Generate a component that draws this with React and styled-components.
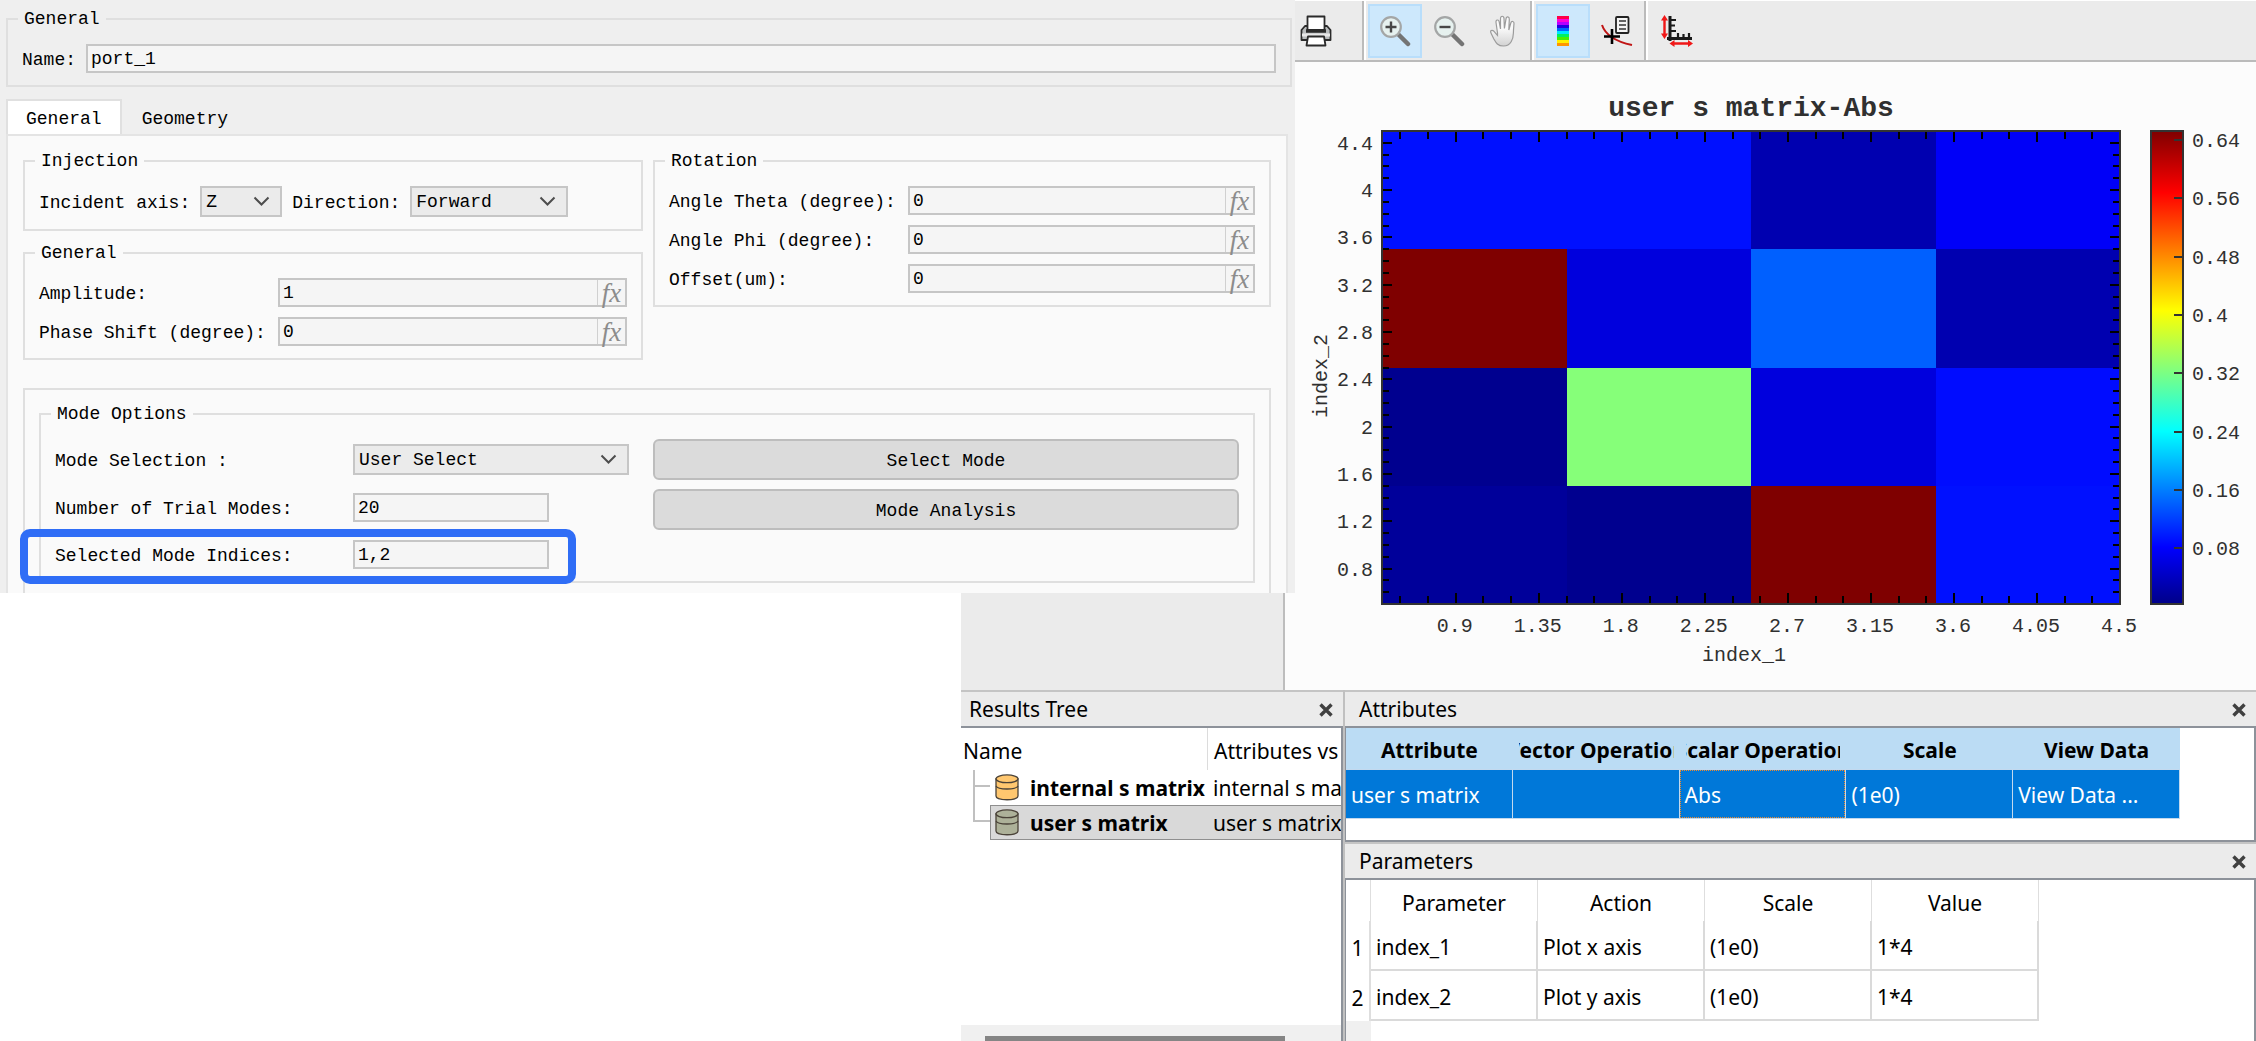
import React, { useId } from "react";
import styled, { createGlobalStyle, css } from "styled-components";

const MONO = `"Liberation Mono", "DejaVu Sans Mono", monospace`;
const SANS = `"Noto Sans", "Open Sans", sans-serif`;

const Global = createGlobalStyle`
  *, *::before, *::after { box-sizing: border-box; }
  body { margin: 0; background: #fff; color: #000; }
  button, input, select { font: inherit; color: inherit; margin: 0; }
`;

/* ---------- page frame ---------- */

const Page = styled.main`
  display: grid;
  grid-template-columns: minmax(0, 961fr) minmax(0, 324fr) 10px minmax(0, 961fr);
  grid-template-rows: auto auto 1fr;
  min-height: 100vh;
  overflow: hidden;
`;

const Dialog = styled.form`
  grid-area: 1 / 1 / 2 / 4;
  z-index: 1;
  display: flex;
  flex-direction: column;
  padding: 9px 3px 0 6px;
  background: #efefef;
  font: 18px/20px ${MONO};
`;

const Backdrop = styled.div`
  grid-area: 2 / 2 / 3 / 3;
  min-height: 97px;
  background: #ebebeb;
  border-right: 2px solid #bdbdbd;
`;

const PlotPane = styled.section`
  grid-area: 1 / 3 / 3 / 5;
  background: #fcfcfc;
`;

const Docks = styled.div`
  grid-area: 3 / 2 / 4 / 5;
  display: grid;
  grid-template-columns: minmax(0, 382fr) minmax(0, 913fr);
  font: 21px/28px ${SANS};
`;

/* ---------- dialog ---------- */

const Group = styled.fieldset`
  min-width: 0;
  margin: 0;
  padding: 15px 14px 12px;
  border: 2px solid #dfdfdf;
`;

const Legend = styled.legend`
  margin-left: -4px;
  padding: 0 6px;
  height: 20px;
`;

const Row = styled.div`
  display: flex;
  align-items: center;
  gap: 10px;
`;

const Stack = styled.div`
  display: flex;
  flex-direction: column;
  gap: ${(p) => p.$gap}px;
`;

const Label = styled.label`
  flex: none;
  white-space: pre;
  padding-top: 2px;
  width: ${(p) => (p.$width ? p.$width + "px" : "auto")};
`;

const TextInput = styled.input`
  flex: 1;
  min-width: 0;
  width: 100%;
  height: 29px;
  padding: 1px 3px 0;
  border: 2px solid #c6c6c6;
  border-radius: 0;
  background: #f5f5f5;
`;

const ShortInput = styled(TextInput)`
  flex: none;
  width: 196px;
`;

const Formula = styled.div`
  flex: 1;
  min-width: 0;
  display: flex;
  height: 29px;
  border: 2px solid #c6c6c6;
  background: #f5f5f5;
`;

const FormulaInput = styled(TextInput)`
  height: 100%;
  border: 0;
`;

const FxButton = styled.button`
  width: 28px;
  padding: 0;
  border: 0;
  border-left: 1px solid #d0d0d0;
  background: transparent;
  color: #8c8c8c;
  font: italic 27px/22px "Liberation Serif", serif;
`;

const SelectBox = styled.span`
  position: relative;
  flex: none;
  width: ${(p) => p.$width}px;

  select {
    appearance: none;
    display: block;
    width: 100%;
    height: 31px;
    padding: 1px 30px 0 4px;
    border: 2px solid #c6c6c6;
    border-radius: 0;
    background: #ebebeb;
  }
  svg {
    position: absolute;
    right: 12px;
    top: 10px;
    pointer-events: none;
  }
`;

const TabBar = styled.div`
  display: flex;
  margin-top: 12px;
`;

const Tab = styled.button`
  height: 35px;
  padding: 2px 18px 0;
  border: 2px solid transparent;
  border-bottom: 0;
  background: transparent;
  ${(p) =>
    p.$active &&
    css`
      border-color: #e0e0e0;
      background: #fff;
    `}
`;

const TabBody = styled.div`
  margin-right: 4px;
  padding: 15px 15px 0;
  border: 2px solid #e4e4e4;
  border-width: 2px 2px 0;
  background: #fafafa;
`;

const Columns = styled.div`
  display: grid;
  grid-template-columns: minmax(0, 621fr) minmax(0, 619fr);
  gap: 10px;
  align-items: start;
`;

const ModeFrame = styled.div`
  margin-top: 28px;
  padding: 14px 14px 10px;
  border: 2px solid #dfdfdf;
  border-bottom: 0;
`;

const ModeGroup = styled(Group)`
  padding-top: 15px;
`;

const ModeColumns = styled.div`
  display: flex;
  gap: 24px;
  align-items: flex-start;
`;

const ModeForm = styled(Stack)`
  padding-top: 5px;
  width: 574px;
`;

const ModeActions = styled(Stack)`
  flex: 1;
`;

const Highlighted = styled(Row)`
  position: relative;
  &::after {
    content: "";
    position: absolute;
    inset: -11px 53px -15px -35px;
    border: 8px solid #2f6df6;
    border-radius: 10px;
    pointer-events: none;
  }
`;

const PushButton = styled.button`
  height: 41px;
  padding-top: 3px;
  border: 2px solid #bdbdbd;
  border-radius: 6px;
  background: #dbdbdb;
`;

/* ---------- toolbar ---------- */

const Toolbar = styled.div`
  display: flex;
  height: 62px;
  border-top: 1px solid #fff;
  border-bottom: 2px solid #bbb;
  background: #ebebeb;
`;

const ToolGroup = styled.div`
  display: flex;
  align-items: center;
  min-width: 79px;
  padding-left: 2px;
  border-left: 2px solid #fff;
  border-right: 2px solid ${(p) => (p.$last ? "transparent" : "#bbb")};
`;

const ToolButton = styled.button`
  display: grid;
  place-items: center;
  width: 54px;
  height: 54px;
  padding: 0;
  border: 2px solid ${(p) => (p.$on ? "#b9defb" : "transparent")};
  background: ${(p) => (p.$on ? "#cde8fc" : "transparent")};
`;

/* ---------- docks ---------- */

const Dock = styled.section`
  display: flex;
  flex-direction: column;
  min-width: 0;
  flex: ${(p) => (p.$grow ? 1 : "none")};
`;

const DockColumn = styled.div`
  display: flex;
  flex-direction: column;
  min-width: 0;
  border-left: 2px solid #c0c0c0;
`;

const DockHeader = styled.header`
  display: flex;
  align-items: center;
  justify-content: space-between;
  height: 38px;
  padding: 0 8px ${(p) => (p.$inset ? "0 14px" : "0 8px")};
  border-top: 2px solid #c4c4c4;
  border-bottom: 2px solid #8d929a;
  background: #ebebeb;
`;

const DockTitle = styled.h2`
  margin: 0;
  font: inherit;
`;

const CloseButton = styled.button`
  display: grid;
  place-items: center;
  width: 18px;
  height: 22px;
  padding: 2px 0 0;
  border: 0;
  background: transparent;
`;

const TreeBody = styled.div`
  flex: 1;
  display: flex;
  flex-direction: column;
  border-right: 2px solid #8d929a;
  overflow: hidden;
`;

const TreeLine = styled.div`
  display: grid;
  grid-template-columns: 247px 1fr;
  height: 42px;
  white-space: nowrap;
`;

const TreeHeadCell = styled.span`
  display: flex;
  align-items: center;
  padding: 4px 0 0 ${(p) => (p.$first ? 2 : 6)}px;
  border-right: ${(p) => (p.$first ? "1px solid #dcdcdc" : "0")};
`;

const TreeList = styled.ul`
  margin: 0;
  padding: 0 0 0 12px;
  list-style: none;
`;

const TreeItem = styled.li`
  display: flex;
  height: 35px;
`;

const Branch = styled.span`
  flex: none;
  width: 17px;
  display: flex;
  flex-direction: column;
  &::before {
    content: "";
    height: 17px;
    border-left: 2px solid #c0c0c0;
    border-bottom: 2px solid #c0c0c0;
  }
  &::after {
    content: "";
    flex: 1;
    border-left: 2px solid ${(p) => (p.$last ? "transparent" : "#c0c0c0")};
  }
`;

const TreeRow = styled.div`
  flex: 1;
  min-width: 0;
  display: grid;
  grid-template-columns: 35px 183px minmax(0, 1fr);
  align-items: center;
  padding-left: 4px;
  border: 1px solid ${(p) => (p.$on ? "#8f8f8f" : "transparent")};
  border-right: 0;
  background: ${(p) => (p.$on ? "#d9d9d9" : "transparent")};
  white-space: nowrap;
  span { overflow: hidden; }
`;

const Scroller = styled.div`
  margin-top: auto;
  height: 16px;
  padding: 11px 56px 0 24px;
  background: #f0f0f0;
  &::before {
    content: "";
    display: block;
    height: 5px;
    background: #858585;
  }
`;

const TableBody = styled.div`
  flex: 1;
  border: 2px solid #8d929a;
  border-width: 0 2px ${(p) => (p.$open ? 0 : 2)}px 1px;
  min-height: ${(p) => (p.$open ? 0 : 114)}px;
  display: flex;
  flex-direction: column;
`;

const Table = styled.table`
  table-layout: fixed;
  width: ${(p) => p.$width}px;
  border-collapse: separate;
  border-spacing: 0;
  th, td { padding: 0; white-space: nowrap; overflow: hidden; }
`;

const AttrHead = styled.th`
  height: 41px;
  background: #bbdcf4;
  font-weight: 700;
`;

const Clip = styled.div`
  display: flex;
  justify-content: center;
  margin: 0 6px;
  padding-top: 2px;
  overflow: hidden;
`;

const AttrCell = styled.td`
  height: 50px;
  border: 1px solid #c3d9ee;
  border-left: 0;
  background: #0078d9;
  color: #fff;
`;

const CellText = styled.div`
  display: flex;
  align-items: center;
  height: 48px;
  padding: 2px 0 0 4px;
  border: 1px ${(p) => (p.$focus ? "dotted #f08a2c" : "solid transparent")};
`;

const ParamHead = styled.th`
  width: ${(p) => p.$width}px;
  height: 41px;
  border-right: 1px solid #dedede;
  font-weight: 400;
  div { padding-top: 4px; }
`;

const ParamIndex = styled.th`
  border-right: 2px solid #dedede;
  font-weight: 400;
  text-align: center;
  div { padding-top: 3px; }
`;

const ParamCell = styled.td`
  height: 50px;
  border-right: 2px solid #dadada;
  border-bottom: 2px solid #dadada;
  div { padding: 3px 0 0 5px; }
`;

const Gutter = styled.div`
  flex: 1;
  width: 25px;
  background: #f0f0f0;
`;

/* ---------- icons ---------- */

const Chevron = () => (
  <svg width="17" height="11" viewBox="0 0 17 11" fill="none" stroke="#4d4d4d" strokeWidth="2" aria-hidden="true">
    <path d="M1.5 1.5 8.5 8.5 15.5 1.5" />
  </svg>
);

const CloseGlyph = () => (
  <svg width="14" height="14" viewBox="0 0 14 14" stroke="#404040" strokeWidth="3.4" aria-hidden="true">
    <path d="M1.500 1.500 12.500 12.500M12.500 1.500 1.500 12.500" />
  </svg>
);

const Database = ({ fill }) => (
  <svg width="24" height="27" viewBox="0 0 24 27" fill={fill} stroke="#4a4238" strokeWidth="1.3" aria-hidden="true">
    <path d="M1 5v17c0 5 22 5 22 0V5z" />
    <ellipse cx="12" cy="4.8" rx="11" ry="3.9" />
    <path d="M1 12c2 4 20 4 22 0" fill="none" />
  </svg>
);

const PrinterIcon = () => (
  <svg width="32" height="32" viewBox="0 0 32 32" stroke="#2b2b2b" strokeWidth="1.8" strokeLinejoin="round" aria-hidden="true">
    <path d="M5 11h22l3.500 4v10h-29V15z" fill="#b9bcbd" />
    <path d="M7.500 15V1.500h17V15z" fill="#fff" />
    <path d="M6 16h20" strokeWidth="3.500" />
    <path d="M2 20h28" stroke="#e8e8e8" strokeWidth="3" />
    <path d="M8 21.500h16l1.500 9H6.500z" fill="#fff" />
  </svg>
);

const ZoomIcon = ({ plus }) => (
  <svg width="32" height="32" viewBox="0 0 32 32" fill="none" aria-hidden="true">
    <path d="M19 19l10 10" stroke="#747474" strokeWidth="4.500" strokeLinecap="round" />
    <circle cx="12" cy="12" r="9.800" fill="#e6f1ef" stroke="#a4a6a6" strokeWidth="2.200" />
    <path d={plus ? "M6.500 12h11M12 6.500v11" : "M6.500 12h11"} stroke="#474747" strokeWidth="2.400" />
  </svg>
);

const HandIcon = () => (
  <svg width="30" height="32" viewBox="0 0 30 32" aria-hidden="true">
    <defs>
      <linearGradient id="palm" x1="0" y1="0" x2="0" y2="1">
        <stop offset="0.4" stopColor="#fafafa" />
        <stop offset="1" stopColor="#d2d2d2" />
      </linearGradient>
    </defs>
    <path
      d="M9.500 18 8 7.500c-.4-3 2.700-3.400 3.200-.6l1.300 7V3.500c0-3 3.300-3 3.500 0l.4 10L18 3.800c.4-2.800 3.500-2.300 3.300.6L20.800 15l2-7c.8-2.500 3.500-1.700 3.200.7-.2 2.500-.6 6-.6 9.300-.1 6-2.600 13-9.800 13-6.500 0-8-4-10-7.500L3.200 18.500c-1.600-3 .8-4 2.800-2.200l3.500 4z"
      fill="url(#palm)"
      stroke="#9b9b9b"
      strokeWidth="1.200"
    />
  </svg>
);

const RainbowIcon = () => (
  <svg width="12" height="30" viewBox="0 0 12 30" aria-hidden="true">
    {["#ff0048", "#ff00d8", "#b400ff", "#2300e0", "#0066ff", "#00e4ff", "#00f060", "#45f000", "#fff000", "#ff9500"].map(
      (c, i) => (
        <rect key={c} y={i * 3} width="12" height="3.200" fill={c} />
      )
    )}
  </svg>
);

const MarkerIcon = () => (
  <svg width="34" height="32" viewBox="0 0 34 32" fill="none" aria-hidden="true">
    <path d="M2 10c3 9 11 16 30 20" stroke="#c01515" strokeWidth="2" />
    <path d="M4 21.500h16M12 14v15" stroke="#000" strokeWidth="2.600" />
    <rect x="16" y="2" width="12.500" height="16" rx="1" fill="#f4f4f4" stroke="#222" strokeWidth="1.800" />
    <path d="M19 6h7M19 10h7M19 14h7" stroke="#333" strokeWidth="1.500" />
  </svg>
);

const AxesIcon = () => (
  <svg width="32" height="32" viewBox="0 0 32 32" fill="none" aria-hidden="true">
    <path d="M9 1v25M6 23.500h25" stroke="#1a1a1a" strokeWidth="3" />
    <path d="M9 5h6M9 10.500h5M9 16h6M17 23v-5M22.500 23v-4M28 23v-5" stroke="#1a1a1a" strokeWidth="2.200" />
    <path d="M3.500 4v16M12 28.500h16" stroke="#f01818" strokeWidth="2.400" />
    <path d="M3.500 0 7 5.500H0zM3.500 24 0 18.500h7zM8.500 28.500l5-3.500v7zM32 28.500 27 25v7z" fill="#f01818" />
  </svg>
);

/* ---------- heat map ---------- */

const CELLS = [
  ["#0010ff", "#0010ff", "#0000b0", "#0000f8"],
  ["#7f0000", "#0000dd", "#0060ff", "#0000b0"],
  ["#00008f", "#86ff79", "#0000dd", "#000cff"],
  ["#00009a", "#00008f", "#7f0000", "#0010ff"],
];
const X_LABELS = [0.9, 1.35, 1.8, 2.25, 2.7, 3.15, 3.6, 4.05, 4.5];
const Y_LABELS = [4.4, 4, 3.6, 3.2, 2.8, 2.4, 2, 1.6, 1.2, 0.8];
const BAR_LABELS = [0.64, 0.56, 0.48, 0.4, 0.32, 0.24, 0.16, 0.08];

const LEFT = 97;
const RIGHT = 835;
const TOP = 69;
const BOTTOM = 542;
const xAt = (v) => LEFT + ((v - 0.5) * (RIGHT - LEFT)) / 4;
const yAt = (v) => BOTTOM - ((v - 0.5) * (BOTTOM - TOP)) / 4;

const ChartSvg = styled.svg`
  display: block;
  width: 100%;
  height: auto;
  font: 20px ${MONO};
  fill: #303030;
`;

const ChartTitle = styled.text`
  font-size: 28px;
  font-weight: 700;
`;

function Chart() {
  const cw = (RIGHT - LEFT) / 4;
  const ch = (BOTTOM - TOP) / 4;
  const ticks = [];
  for (let i = 0; i <= 26; i++) {
    const x = xAt(0.6 + i * 0.15);
    const n = i % 3 === 2 ? 11 : 8;
    ticks.push(`M${x} ${TOP}v${n}M${x} ${BOTTOM}v${-n}`);
  }
  for (let i = 0; i <= 38; i++) {
    const y = yAt(0.6 + i * 0.1);
    const n = i % 4 === 2 ? 10 : 7;
    ticks.push(`M${LEFT} ${y}h${n}M${RIGHT} ${y}h${-n}`);
  }
  return (
    <ChartSvg viewBox="0 0 971 627" role="img" aria-label="user s matrix-Abs heat map">
      <defs>
        <linearGradient id="jet" x1="0" y1="0" x2="0" y2="1">
          <stop offset="0" stopColor="#7f0000" />
          <stop offset="0.13" stopColor="#ff0000" />
          <stop offset="0.38" stopColor="#ffff00" />
          <stop offset="0.635" stopColor="#00ffff" />
          <stop offset="0.88" stopColor="#0000ff" />
          <stop offset="1" stopColor="#000088" />
        </linearGradient>
      </defs>
      <ChartTitle x="466" y="54" textAnchor="middle">user s matrix-Abs</ChartTitle>
      <g shapeRendering="crispEdges">
        {CELLS.map((row, r) =>
          row.map((c, i) => (
            <rect key={`${r}-${i}`} x={LEFT + i * cw} y={TOP + r * ch} width={cw} height={ch} fill={c} />
          ))
        )}
        <path d={ticks.join("")} stroke="#000" strokeWidth="2" fill="none" />
        <rect x={LEFT} y={TOP} width={RIGHT - LEFT} height={BOTTOM - TOP} fill="none" stroke="#333" strokeWidth="2" />
        <rect x="866" y={TOP} width="32" height={BOTTOM - TOP} fill="url(#jet)" stroke="#333" strokeWidth="2" />
        {BAR_LABELS.map((v, i) => (
          <path key={v} d={`M897 ${Math.round(78 + i * 58.3)}h-8`} stroke="#333" strokeWidth="2" />
        ))}
      </g>
      {X_LABELS.map((v) => (
        <text key={v} x={xAt(v) - 1} y="570" textAnchor="middle">{v}</text>
      ))}
      {Y_LABELS.map((v) => (
        <text key={v} x="88" y={yAt(v) + 7} textAnchor="end">{v}</text>
      ))}
      {BAR_LABELS.map((v, i) => (
        <text key={v} x="907" y={85 + i * 58.3}>{v}</text>
      ))}
      <text x="459" y="599" textAnchor="middle">index_1</text>
      <text transform="translate(42 314) rotate(-90)" textAnchor="middle">index_2</text>
    </ChartSvg>
  );
}

/* ---------- composed parts ---------- */

function FormulaRow({ label, value }) {
  const id = useId();
  return (
    <Row>
      <Label htmlFor={id} $width={229}>{label}</Label>
      <Formula>
        <FormulaInput id={id} defaultValue={value} />
        <FxButton type="button">fx</FxButton>
      </Formula>
    </Row>
  );
}

function LabeledSelect({ label, value, width, labelWidth }) {
  const id = useId();
  return (
    <>
      <Label htmlFor={id} $width={labelWidth}>{label}</Label>
      <SelectBox $width={width}>
        <select id={id} defaultValue={value}>
          <option>{value}</option>
        </select>
        <Chevron />
      </SelectBox>
    </>
  );
}

function PortDialog() {
  return (
    <Dialog>
      <Group>
        <Legend>General</Legend>
        <Row>
          <Label htmlFor="port-name">Name:</Label>
          <TextInput id="port-name" defaultValue="port_1" />
        </Row>
      </Group>
      <TabBar role="tablist">
        <Tab type="button" role="tab" aria-selected="true" $active>General</Tab>
        <Tab type="button" role="tab" aria-selected="false">Geometry</Tab>
      </TabBar>
      <TabBody role="tabpanel">
        <Columns>
          <Stack $gap={12}>
            <Group>
              <Legend>Injection</Legend>
              <Row>
                <LabeledSelect label="Incident axis:" value="Z" width={82} />
                <LabeledSelect label="Direction:" value="Forward" width={158} />
              </Row>
            </Group>
            <Group>
              <Legend>General</Legend>
              <Stack $gap={10}>
                <FormulaRow label="Amplitude:" value="1" />
                <FormulaRow label="Phase Shift (degree):" value="0" />
              </Stack>
            </Group>
          </Stack>
          <Group>
            <Legend>Rotation</Legend>
            <Stack $gap={10}>
              <FormulaRow label="Angle Theta (degree):" value="0" />
              <FormulaRow label="Angle Phi (degree):" value="0" />
              <FormulaRow label="Offset(um):" value="0" />
            </Stack>
          </Group>
        </Columns>
        <ModeFrame>
          <ModeGroup>
            <Legend>Mode Options</Legend>
            <ModeColumns>
              <ModeForm $gap={18}>
                <Row>
                  <LabeledSelect label="Mode Selection :" labelWidth={288} value="User Select" width={276} />
                </Row>
                <Row>
                  <Label htmlFor="trial-modes" $width={288}>Number of Trial Modes:</Label>
                  <ShortInput id="trial-modes" defaultValue="20" />
                </Row>
                <Highlighted>
                  <Label htmlFor="mode-indices" $width={288}>Selected Mode Indices:</Label>
                  <ShortInput id="mode-indices" defaultValue="1,2" />
                </Highlighted>
              </ModeForm>
              <ModeActions $gap={9}>
                <PushButton type="button">Select Mode</PushButton>
                <PushButton type="button">Mode Analysis</PushButton>
              </ModeActions>
            </ModeColumns>
          </ModeGroup>
        </ModeFrame>
      </TabBody>
    </Dialog>
  );
}

function PlotToolbar() {
  return (
    <Toolbar role="toolbar">
      <ToolGroup>
        <ToolButton aria-label="Print"><PrinterIcon /></ToolButton>
      </ToolGroup>
      <ToolGroup>
        <ToolButton aria-label="Zoom in" $on><ZoomIcon plus /></ToolButton>
        <ToolButton aria-label="Zoom out"><ZoomIcon /></ToolButton>
        <ToolButton aria-label="Pan"><HandIcon /></ToolButton>
      </ToolGroup>
      <ToolGroup>
        <ToolButton aria-label="Color bar" $on><RainbowIcon /></ToolButton>
        <ToolButton aria-label="Data marker"><MarkerIcon /></ToolButton>
      </ToolGroup>
      <ToolGroup $last>
        <ToolButton aria-label="Axes"><AxesIcon /></ToolButton>
      </ToolGroup>
    </Toolbar>
  );
}

function Header({ title, inset }) {
  return (
    <DockHeader $inset={inset}>
      <DockTitle>{title}</DockTitle>
      <CloseButton aria-label={`Close ${title}`}><CloseGlyph /></CloseButton>
    </DockHeader>
  );
}

const RESULTS = [
  { name: "internal s matrix", attr: "internal s matrix", fill: "#ffc76f" },
  { name: "user s matrix", attr: "user s matrix", fill: "#adb199", on: true },
];
const ATTRIBUTES = ["Attribute", "Vector Operation", "Scalar Operation", "Scale", "View Data"];
const ATTRIBUTE_ROW = ["user s matrix", "", "Abs", "(1e0)", "View Data ..."];
const PARAMETERS = ["Parameter", "Action", "Scale", "Value"];
const PARAMETER_ROWS = [
  ["index_1", "Plot x axis", "(1e0)", "1*4"],
  ["index_2", "Plot y axis", "(1e0)", "1*4"],
];

function ResultsTree() {
  return (
    <Dock>
      <Header title="Results Tree" />
      <TreeBody>
        <TreeLine>
          <TreeHeadCell $first>Name</TreeHeadCell>
          <TreeHeadCell>Attributes vs</TreeHeadCell>
        </TreeLine>
        <TreeList>
          {RESULTS.map((r, i) => (
            <TreeItem key={r.name}>
              <Branch $last={i === RESULTS.length - 1} />
              <TreeRow $on={r.on}>
                <Database fill={r.fill} />
                <b>{r.name}</b>
                <span>{r.attr}</span>
              </TreeRow>
            </TreeItem>
          ))}
        </TreeList>
        <Scroller />
      </TreeBody>
    </Dock>
  );
}

function AttributesDock() {
  return (
    <Dock>
      <Header title="Attributes" inset />
      <TableBody>
        <Table $width={834}>
          <thead>
            <tr>
              {ATTRIBUTES.map((h) => (
                <AttrHead key={h} scope="col"><Clip>{h}</Clip></AttrHead>
              ))}
            </tr>
          </thead>
          <tbody>
            <tr>
              {ATTRIBUTE_ROW.map((t, i) => (
                <AttrCell key={i}><CellText $focus={i === 2}>{t}</CellText></AttrCell>
              ))}
            </tr>
          </tbody>
        </Table>
      </TableBody>
    </Dock>
  );
}

function ParametersDock() {
  return (
    <Dock $grow>
      <Header title="Parameters" inset />
      <TableBody $open>
        <Table $width={693}>
          <thead>
            <tr>
              <ParamHead $width={25} aria-label="Row" />
              {PARAMETERS.map((h) => (
                <ParamHead key={h} $width={167} scope="col"><div>{h}</div></ParamHead>
              ))}
            </tr>
          </thead>
          <tbody>
            {PARAMETER_ROWS.map((row, i) => (
              <tr key={row[0]}>
                <ParamIndex scope="row"><div>{i + 1}</div></ParamIndex>
                {row.map((t, j) => (
                  <ParamCell key={j}><div>{t}</div></ParamCell>
                ))}
              </tr>
            ))}
          </tbody>
        </Table>
        <Gutter />
      </TableBody>
    </Dock>
  );
}

export default function App() {
  return (
    <>
      <Global />
      <Page>
        <PortDialog />
        <Backdrop />
        <PlotPane>
          <PlotToolbar />
          <Chart />
        </PlotPane>
        <Docks>
          <ResultsTree />
          <DockColumn>
            <AttributesDock />
            <ParametersDock />
          </DockColumn>
        </Docks>
      </Page>
    </>
  );
}
